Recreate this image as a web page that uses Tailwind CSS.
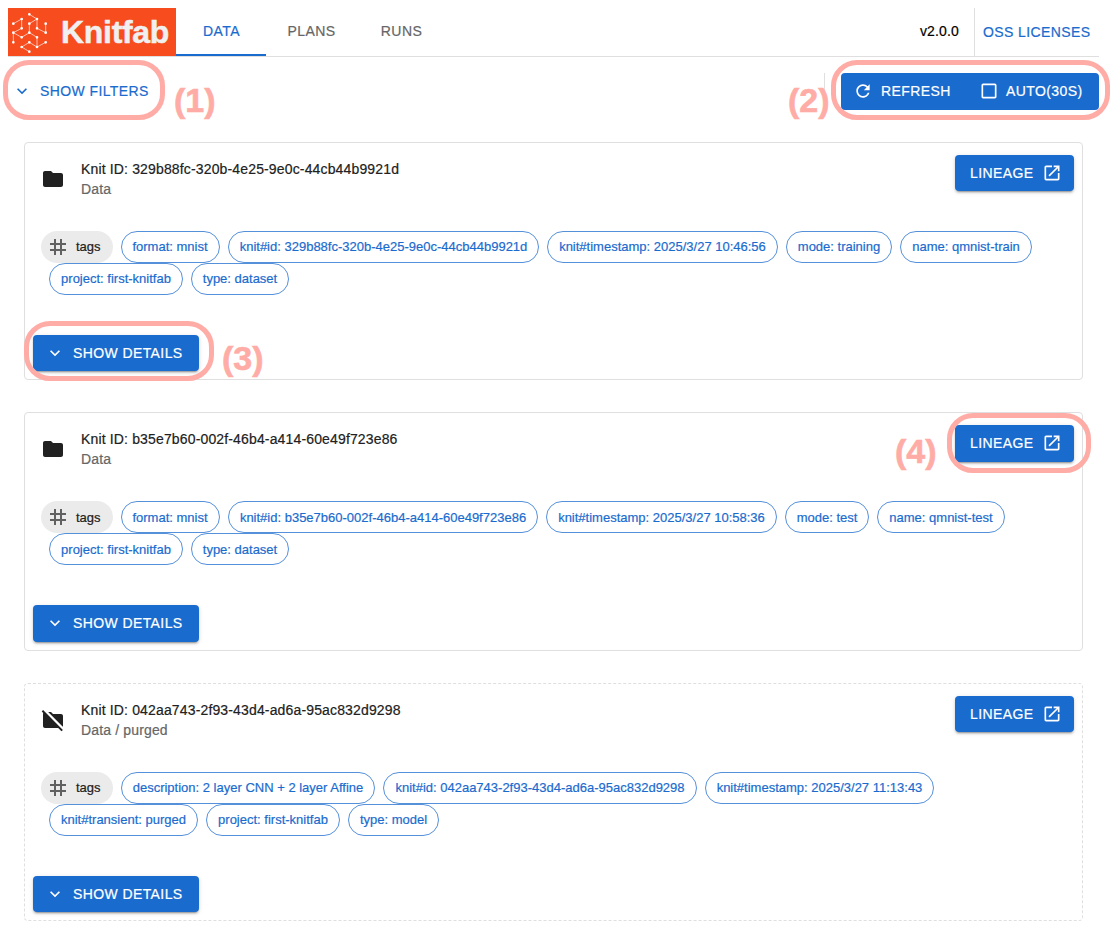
<!DOCTYPE html>
<html lang="en">
<head>
<meta charset="utf-8">
<title>Knitfab</title>
<script src="https://cdn.jsdelivr.net/npm/@tailwindcss/browser@4"></script>
</head>
<body class="relative h-[945px] w-[1115px] overflow-hidden bg-white font-['Liberation_Sans',Arial,sans-serif] text-sm text-[#212121] [-webkit-text-stroke:0.2px]">
<svg class="hidden">
  <symbol id="down" viewBox="0 0 24 24"><path d="M7.41 8.59 12 13.17l4.59-4.58L18 10l-6 6-6-6z"/></symbol>
  <symbol id="open" viewBox="0 0 24 24"><path d="M19 19H5V5h7V3H5c-1.11 0-2 .9-2 2v14c0 1.1.89 2 2 2h14c1.1 0 2-.9 2-2v-7h-2zM14 3v2h3.59l-9.83 9.83 1.41 1.41L19 6.41V10h2V3z"/></symbol>
  <symbol id="folder" viewBox="0 0 24 24"><path d="M10 4H4c-1.1 0-1.99.9-1.99 2L2 18c0 1.1.9 2 2 2h16c1.1 0 2-.9 2-2V8c0-1.1-.9-2-2-2h-8z"/></symbol>
  <symbol id="folder-off" viewBox="0 0 24 24"><path d="M20 6h-8l-2-2H7.17l14.65 14.65c.11-.2.18-.41.18-.65V8c0-1.1-.9-2-2-2M2.1 2.1.69 3.51l1.56 1.56C2.1 5.35 2.01 5.66 2.01 6L2 18c0 1.1.9 2 2 2h13.17l3.31 3.31 1.41-1.41z"/></symbol>
  <symbol id="hash" viewBox="0 0 24 24"><path d="M20 10V8h-4V4h-2v4h-4V4H8v4H4v2h4v4H4v2h4v4h2v-4h4v4h2v-4h4v-2h-4v-4zm-6 4h-4v-4h4z"/></symbol>
  <symbol id="refresh" viewBox="0 0 24 24"><path d="M17.650 6.350C16.200 4.900 14.210 4 12 4c-4.420 0-7.990 3.580-7.990 8s3.570 8 7.990 8c3.730 0 6.840-2.550 7.730-6h-2.080c-.820 2.330-3.040 4-5.650 4-3.310 0-6-2.690-6-6s2.690-6 6-6c1.660 0 3.140.690 4.220 1.780L13 11h7V4z"/></symbol>
  <symbol id="box" viewBox="0 0 24 24"><path d="M19 5v14H5V5zm0-2H5c-1.100 0-2 .900-2 2v14c0 1.100.900 2 2 2h14c1.100 0 2-.900 2-2V5c0-1.100-.900-2-2-2"/></symbol>
</svg>

<header class="mx-2 mt-2 flex h-[49px] w-[1091px] border-b border-[#dfdfdf]">
  <div class="flex h-12 w-[168px] items-center bg-[#f64c1e]">
    <svg class="h-12 w-[53px] shrink-0 pr-px" viewBox="24 24 156 144" fill="none" stroke="#fbd5cb" stroke-width="2.500">
      <path d="M40 71 65 57V85L40 98V127M40 98 65 112 88 98M88 43 111 57V85L137 98V71M111 57 88 71V98L111 112V141L137 127M111 141 88 127 65 141 88 155"/>
      <path d="M40 71h0M65 57h0M65 85h0M40 98h0M40 127h0M65 112h0M88 98h0M88 43h0M111 57h0M111 85h0M137 98h0M137 71h0M88 71h0M111 112h0M111 141h0M137 127h0M88 127h0M65 141h0M88 155h0" stroke="#fff" stroke-width="8" stroke-linecap="round"/>
    </svg>
    <span class="text-[32px] leading-none font-bold tracking-[-0.3px] text-[#f1f0f0] [-webkit-text-stroke:0.5px]">Knitfab</span>
  </div>
  <nav class="flex tracking-[0.4px] text-[#666]">
    <div class="flex h-12 w-[90px] items-center justify-center border-b-2 border-[#1a6bce] pl-px text-[#1a6bce]">DATA</div>
    <div class="flex h-[46px] w-[90px] items-center justify-center pl-px">PLANS</div>
    <div class="flex h-[46px] w-[90px] items-center justify-center pl-px">RUNS</div>
  </nav>
  <span class="mr-[15px] ml-auto flex h-[46px] items-center tracking-[0.15px] text-black">v2.0.0</span>
  <div class="flex h-12 w-[125px] items-center border-l border-[#dfdfdf] pl-2 tracking-[0.4px] whitespace-nowrap text-[#1a6bce]">OSS LICENSES</div>
</header>

<div class="mx-2 mt-4 flex h-[37px] w-[1091px] items-start tracking-[0.4px]">
  <button class="flex h-9 items-center gap-2 pl-1 tracking-[0.4px] text-[#1a6bce]"><svg class="size-5" fill="currentColor"><use href="#down"/></svg>SHOW FILTERS</button>
  <div class="mr-4 ml-auto h-full w-px bg-[#dfdfdf]"></div>
  <div class="flex h-[37px] w-[258px] items-center rounded bg-[#1a6bce] pb-px pl-3 text-white">
    <svg class="mr-2 size-5" fill="currentColor"><use href="#refresh"/></svg><span class="w-[98px]">REFRESH</span>
    <svg class="mr-[7px] size-5" fill="currentColor"><use href="#box"/></svg><span>AUTO(30S)</span>
  </div>
</div>

<main class="mt-8 ml-6 flex w-[1059px] flex-col gap-8">
  <section class="flex h-[238px] flex-col rounded border border-[#dfdfdf]">
    <div class="flex h-[72px] pt-4 pl-4">
      <svg class="mt-2 mr-4 size-6 fill-[#212121]"><use href="#folder"/></svg>
      <div class="leading-5 tracking-[0.15px]"><p>Knit ID: 329b88fc-320b-4e25-9e0c-44cb44b9921d</p><p class="text-[#666]">Data</p></div>
      <button class="-mt-1 mr-2 ml-auto flex h-9 w-[119px] items-center rounded bg-[#1a6bce] pl-[15px] tracking-[0.4px] text-white shadow-[0_3px_1px_-2px_rgba(0,0,0,.2),0_2px_2px_0_rgba(0,0,0,.14),0_1px_5px_0_rgba(0,0,0,.12)]"><span class="w-[72px] text-left">LINEAGE</span><svg class="size-5 fill-white"><use href="#open"/></svg></button>
    </div>
    <div class="mt-4 flex h-16 flex-wrap content-start pl-4 text-[13px] text-[#1a6bce]">
      <span class="flex h-8 w-[72px] items-center rounded-full bg-[#ebebeb] pl-[5px] text-[#212121]"><svg class="mr-1.5 size-6 fill-[#616161]"><use href="#hash"/></svg>tags</span>
      <span class="ml-2 flex h-8 w-[99px] items-center justify-center rounded-full border border-[#5590db] pr-px">format: mnist</span>
      <span class="ml-2 flex h-8 w-[311px] items-center justify-center rounded-full border border-[#5590db]">knit#id: 329b88fc-320b-4e25-9e0c-44cb44b9921d</span>
      <span class="ml-2 flex h-8 w-[231px] items-center justify-center rounded-full border border-[#5590db]">knit#timestamp: 2025/3/27 10:46:56</span>
      <span class="ml-2 flex h-8 w-[106px] items-center justify-center rounded-full border border-[#5590db]">mode: training</span>
      <span class="mr-6 ml-2 flex h-8 w-[132px] items-center justify-center rounded-full border border-[#5590db]">name: qmnist-train</span>
      <span class="ml-2 flex h-8 w-[134px] items-center justify-center rounded-full border border-[#5590db]">project: first-knitfab</span>
      <span class="ml-2 flex h-8 w-[98px] items-center justify-center rounded-full border border-[#5590db]">type: dataset</span>
    </div>
    <button class="mt-10 ml-2 flex h-9 w-[166px] shrink-0 items-center gap-2 rounded bg-[#1a6bce] pl-3 tracking-[0.4px] text-white shadow-[0_3px_1px_-2px_rgba(0,0,0,.2),0_2px_2px_0_rgba(0,0,0,.14),0_1px_5px_0_rgba(0,0,0,.12)]"><svg class="size-5 fill-white"><use href="#down"/></svg>SHOW DETAILS</button>
  </section>

  <section class="flex h-[239px] flex-col rounded border border-[#dfdfdf]">
    <div class="flex h-[72px] pt-4 pl-4">
      <svg class="mt-2 mr-4 size-6 fill-[#212121]"><use href="#folder"/></svg>
      <div class="leading-5 tracking-[0.15px]"><p>Knit ID: b35e7b60-002f-46b4-a414-60e49f723e86</p><p class="text-[#666]">Data</p></div>
      <button class="-mt-1 mr-2 ml-auto flex h-[37px] w-[119px] items-center rounded bg-[#1a6bce] pb-px pl-[15px] tracking-[0.4px] text-white shadow-[0_3px_1px_-2px_rgba(0,0,0,.2),0_2px_2px_0_rgba(0,0,0,.14),0_1px_5px_0_rgba(0,0,0,.12)]"><span class="w-[72px] text-left">LINEAGE</span><svg class="size-5 fill-white"><use href="#open"/></svg></button>
    </div>
    <div class="mt-4 flex h-16 flex-wrap content-start pl-4 text-[13px] text-[#1a6bce]">
      <span class="flex h-8 w-[72px] items-center rounded-full bg-[#ebebeb] pl-[5px] text-[#212121]"><svg class="mr-1.5 size-6 fill-[#616161]"><use href="#hash"/></svg><span class="pt-0.5">tags</span></span>
      <span class="ml-2 flex h-8 w-[99px] items-center justify-center rounded-full border border-[#5590db] pt-0.5 pr-px">format: mnist</span>
      <span class="ml-2 flex h-8 w-[310px] items-center justify-center rounded-full border border-[#5590db] pt-0.5">knit#id: b35e7b60-002f-46b4-a414-60e49f723e86</span>
      <span class="ml-2 flex h-8 w-[231px] items-center justify-center rounded-full border border-[#5590db] pt-0.5">knit#timestamp: 2025/3/27 10:58:36</span>
      <span class="ml-2 flex h-8 w-[84px] items-center justify-center rounded-full border border-[#5590db] pt-0.5">mode: test</span>
      <span class="mr-12 ml-2 flex h-8 w-[128px] items-center justify-center rounded-full border border-[#5590db] pt-0.5">name: qmnist-test</span>
      <span class="ml-2 flex h-8 w-[134px] items-center justify-center rounded-full border border-[#5590db] pt-0.5">project: first-knitfab</span>
      <span class="ml-2 flex h-8 w-[98px] items-center justify-center rounded-full border border-[#5590db] pt-0.5">type: dataset</span>
    </div>
    <button class="mt-10 ml-2 flex h-[37px] w-[166px] shrink-0 items-center gap-2 rounded bg-[#1a6bce] pb-px pl-3 tracking-[0.4px] text-white shadow-[0_3px_1px_-2px_rgba(0,0,0,.2),0_2px_2px_0_rgba(0,0,0,.14),0_1px_5px_0_rgba(0,0,0,.12)]"><svg class="size-5 fill-white"><use href="#down"/></svg>SHOW DETAILS</button>
  </section>

  <section class="flex h-[238px] flex-col rounded border border-dashed border-[#dfdfdf]">
    <div class="flex h-[72px] pt-4 pl-4">
      <svg class="mt-2 mr-4 size-6 fill-[#212121]"><use href="#folder-off"/></svg>
      <div class="leading-5 tracking-[0.15px]"><p>Knit ID: 042aa743-2f93-43d4-ad6a-95ac832d9298</p><p class="text-[#666]">Data / purged</p></div>
      <button class="-mt-1 mr-2 ml-auto flex h-9 w-[119px] items-center rounded bg-[#1a6bce] pl-[15px] tracking-[0.4px] text-white shadow-[0_3px_1px_-2px_rgba(0,0,0,.2),0_2px_2px_0_rgba(0,0,0,.14),0_1px_5px_0_rgba(0,0,0,.12)]"><span class="w-[72px] text-left">LINEAGE</span><svg class="size-5 fill-white"><use href="#open"/></svg></button>
    </div>
    <div class="mt-4 flex h-16 flex-wrap content-start pl-4 text-[13px] text-[#1a6bce]">
      <span class="flex h-8 w-[72px] items-center rounded-full bg-[#ebebeb] pl-[5px] text-[#212121]"><svg class="mr-1.5 size-6 fill-[#616161]"><use href="#hash"/></svg>tags</span>
      <span class="ml-2 flex h-8 w-[254px] items-center justify-center rounded-full border border-[#5590db]">description: 2 layer CNN + 2 layer Affine</span>
      <span class="ml-2 flex h-8 w-[314px] items-center justify-center rounded-full border border-[#5590db]">knit#id: 042aa743-2f93-43d4-ad6a-95ac832d9298</span>
      <span class="mr-20 ml-2 flex h-8 w-[229px] items-center justify-center rounded-full border border-[#5590db]">knit#timestamp: 2025/3/27 11:13:43</span>
      <span class="ml-2 flex h-8 w-[149px] items-center justify-center rounded-full border border-[#5590db]">knit#transient: purged</span>
      <span class="ml-2 flex h-8 w-[134px] items-center justify-center rounded-full border border-[#5590db]">project: first-knitfab</span>
      <span class="ml-2 flex h-8 w-[91px] items-center justify-center rounded-full border border-[#5590db]">type: model</span>
    </div>
    <button class="mt-10 ml-2 flex h-9 w-[166px] shrink-0 items-center gap-2 rounded bg-[#1a6bce] pl-3 tracking-[0.4px] text-white shadow-[0_3px_1px_-2px_rgba(0,0,0,.2),0_2px_2px_0_rgba(0,0,0,.14),0_1px_5px_0_rgba(0,0,0,.12)]"><svg class="size-5 fill-white"><use href="#down"/></svg>SHOW DETAILS</button>
  </section>
</main>

<!-- Numbered callouts over the page -->
<div class="pointer-events-none absolute inset-0 text-[34px] leading-10 font-bold text-[#ffaca6] [-webkit-text-stroke:0.6px]">
  <div class="absolute top-[60px] left-[3px] h-[60px] w-[162px] rounded-[26px] border-[5px] border-[#ffaca6]"></div>
  <span class="absolute top-[80px] left-[174px]">(1)</span>
  <div class="absolute top-[60px] left-[831px] h-[60px] w-[279px] rounded-[26px] border-[5px] border-[#ffaca6]"></div>
  <span class="absolute top-[80px] left-[788px]">(2)</span>
  <div class="absolute top-[321px] left-[24px] h-[60px] w-[190px] rounded-[26px] border-[5px] border-[#ffaca6]"></div>
  <span class="absolute top-[338px] left-[222px]">(3)</span>
  <div class="absolute top-[413px] left-[947px] h-[60px] w-[144px] rounded-[26px] border-[5px] border-[#ffaca6]"></div>
  <span class="absolute top-[431px] left-[895px]">(4)</span>
</div>
</body>
</html>
